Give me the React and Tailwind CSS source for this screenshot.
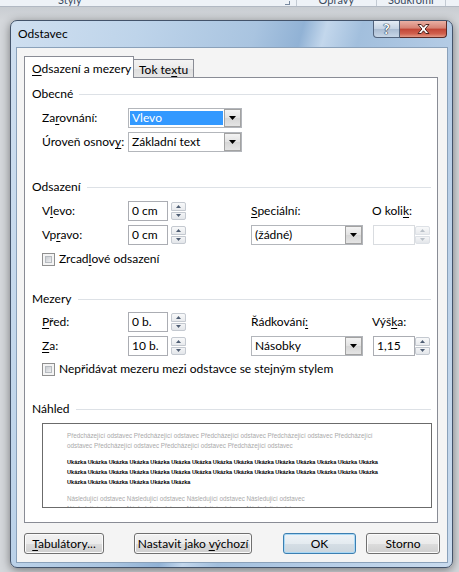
import React from "react";

function U({ children }) {
  return <span className="underline decoration-[1px] underline-offset-[2px]">{children}</span>;
}

function Heading({ label, className }) {
  return (
    <div className={`flex h-[14px] items-center pl-[7px] pr-[6px] ${className}`}>
      <span className="leading-none">{label}</span>
      <div className="ml-[6px] h-px flex-1 bg-[#dde1e6]" />
    </div>
  );
}

function DropBtn({ faded }) {
  return (
    <div className="flex h-full w-[17px] items-center justify-center border border-[#a2a2a2] bg-[linear-gradient(#f3f3f3,#e2e2e2_50%,#d6d6d6_51%,#e4e4e4)]">
      <svg width="7" height="4" viewBox="0 0 7 4">
        <path d="M0 0h7L3.5 4z" fill={faded ? "#888" : "#000"} />
      </svg>
    </div>
  );
}

function Combo({ value, selected, className }) {
  return (
    <div className={`flex h-[20px] border border-[#b3b6bb] bg-white ${className}`}>
      <div className="flex flex-1 px-[1px] py-[2px]">
        <span
          className={`flex w-full items-center pl-[2px] leading-none ${
            selected ? "bg-[#3399ff] text-white" : "text-black"
          }`}
        >
          {value}
        </span>
      </div>
      <DropBtn />
    </div>
  );
}

function Spinner({ disabled }) {
  const fill = disabled ? "#b9c0c8" : "#4f5e74";
  return (
    <div className="flex h-[18px] w-[15px] flex-col gap-px">
      <div
        className={`flex flex-1 items-center justify-center rounded-t-[2px] border ${
          disabled ? "border-[#dde1e6]" : "border-[#c4c9d0]"
        } bg-[linear-gradient(#f8f9fa,#e8eaed)]`}
      >
        <svg width="5" height="3" viewBox="0 0 5 3">
          <path d="M0 3h5L2.5 0z" fill={fill} />
        </svg>
      </div>
      <div
        className={`flex flex-1 items-center justify-center rounded-b-[2px] border ${
          disabled ? "border-[#dde1e6]" : "border-[#c4c9d0]"
        } bg-[linear-gradient(#f3f4f6,#e3e6ea)]`}
      >
        <svg width="5" height="3" viewBox="0 0 5 3">
          <path d="M0 0h5L2.5 3z" fill={fill} />
        </svg>
      </div>
    </div>
  );
}

function SpinField({ value, disabled, tight }) {
  return (
    <div className="flex h-[20px] items-center">
      <div
        className={`flex h-full items-center border bg-white pl-[3px] leading-none ${
          disabled ? "border-[#d9dce0]" : "border-[#abadb3]"
        } ${tight ? "w-[42px]" : "w-[40px]"}`}
      >
        {value}
      </div>
      <div className={tight ? "ml-0" : "ml-[3px]"}>
        <Spinner disabled={disabled} />
      </div>
    </div>
  );
}

function Check({ label }) {
  return (
    <div className="flex h-[14px] items-center pl-[17px]">
      <div className="h-[13px] w-[13px] border border-[#8f8f8f] bg-[#f4f4f4] p-[2px]">
        <div className="h-full w-full border border-[#b7bbc0] bg-[linear-gradient(135deg,#c9ccd1,#eeeff1)]" />
      </div>
      <span className="ml-[4px] leading-none">{label}</span>
    </div>
  );
}

function Btn({ children, className, focused }) {
  return (
    <div
      className={`flex h-[21px] items-center justify-center rounded-[3px] border leading-none ${
        focused
          ? "border-[#3c7fb1] bg-[linear-gradient(#eef3f7,#e4ebf0_50%,#d5dee5_51%,#cbd6de)] shadow-[inset_0_0_0_1px_#a9d8f5]"
          : "border-[#707070] bg-[linear-gradient(#f2f2f2,#ebebeb_50%,#dddddd_51%,#cfcfcf)] shadow-[inset_0_0_0_1px_#fbfbfb]"
      } ${className}`}
    >
      {children}
    </div>
  );
}

const PREV = "Předcházející odstavec";
const NEXT = "Následující odstavec";

export default function App() {
  const ukazka = (n) => Array(n).fill("Ukázka").join(" ");
  return (
    <div className="h-[572px] w-[459px] overflow-hidden bg-[#d4d7db] font-['Lato',sans-serif] text-[12px] text-black">
      {/* ribbon sliver behind the dialog */}
      <div className="flex h-[7px] overflow-hidden border-b border-[#b2b9c3] bg-[#eef2f7] text-[11px] text-[#3b4a5e]">
        <span className="-mt-[8px] ml-[58px]">Styly</span>
        <div className="ml-[203px] mt-[1px] h-[4px] w-[5px] border-r border-b border-[#7a8aa0]" />
        <div className="ml-[6px] h-full w-px bg-[#c3cad3]" />
        <span className="-mt-[8px] ml-[22px]">Opravy</span>
        <div className="ml-[22px] h-full w-px bg-[#c3cad3]" />
        <span className="-mt-[8px] ml-[11px]">Soukromí</span>
        <div className="ml-[11px] h-full w-px bg-[#c3cad3]" />
      </div>
      <div className="h-[13px] bg-[linear-gradient(#c9cdd2,#d3d6da)]" />

      {/* dialog */}
      <div className="ml-[10px] w-[443px] rounded-[7px] border border-[#43536a] bg-[linear-gradient(105deg,#cfdff0_0%,#bed4ea_22%,#a9c4e0_42%,#91b2d5_50%,#c3d7ec_54%,#a2bfdd_60%,#b6cde6_78%,#c9dbee_100%)] shadow-[0_2px_10px_rgba(0,0,0,0.45)]">
        {/* title bar */}
        <div className="flex h-[27px] items-start">
          <span className="ml-[7px] mt-[7px] text-[12px] leading-none">Odstavec</span>
          <div className="flex-1" />
          <div className="mr-[5px] flex h-[17px]">
            <div className="flex w-[27px] items-center justify-center rounded-bl-[4px] border border-t-0 border-[#52637c] bg-[linear-gradient(#e4ecf5,#c5d3e3_48%,#a9bbd1_50%,#c7d6e7)]">
              <span className="text-[14px] font-bold leading-none text-white [text-shadow:0_0_1px_#1d2b40,0_0_1px_#1d2b40,0_0_1px_#1d2b40]">
                ?
              </span>
            </div>
            <div className="flex w-[47px] items-center justify-center rounded-br-[4px] border border-l-0 border-t-0 border-[#5b2a26] bg-[linear-gradient(#eab0a4,#d68273_45%,#c14535_50%,#d0604d_80%,#e39a87)]">
              <svg width="15" height="12" viewBox="0 0 15 12">
                <path
                  d="M2 1.5h3.2l2.3 2.7 2.3-2.7H13l-3.9 4.5 3.9 4.5H9.8L7.5 7.8 5.2 10.5H2l3.9-4.5z"
                  fill="#fff"
                  stroke="#3a1410"
                  strokeWidth="0.9"
                  strokeLinejoin="round"
                />
              </svg>
            </div>
          </div>
        </div>

        {/* client area */}
        <div className="mx-[6px] mb-[5px] ml-[6px] h-[514px] w-[430px] bg-[#f4f4f4] px-[7px] pt-[8px] shadow-[0_0_0_1px_#8aa1ba]">
          {/* tabs */}
          <div className="flex h-[21px] items-end">
            <div className="relative z-10 -mb-px flex h-[22px] w-[110px] items-center border border-b-0 border-[#898c95] bg-white pl-[7px] pt-[3px] leading-none">
              <U>O</U>dsazení a mezery
            </div>
            <div className="flex h-[18px] w-[60px] items-center border border-l-0 border-b-0 border-[#898c95] bg-[linear-gradient(#f3f3f3,#ebebeb_50%,#dedede_51%,#e6e6e6)] pl-[5px] pt-[2px] leading-none">
              Tok te<U>x</U>tu
            </div>
          </div>

          {/* panel */}
          <div className="h-[446px] w-[414px] border border-[#898c95] bg-white">
            <Heading label="Obecné" className="mt-[9px]" />
            <div className="mt-[7px] flex h-[20px] items-center pl-[17px]">
              <span className="w-[86px] leading-none">
                Za<U>r</U>ovnání:
              </span>
              <Combo value="Vlevo" selected className="w-[114px]" />
            </div>
            <div className="mt-[4px] flex h-[20px] items-center pl-[17px]">
              <span className="w-[86px] leading-none">
                Úroveň osnov<U>y</U>:
              </span>
              <Combo value="Základní text" className="w-[114px]" />
            </div>

            <Heading label="Odsazení" className="mt-[28px]" />
            <div className="mt-[7px] flex h-[20px] items-center pl-[17px]">
              <span className="w-[86px] leading-none">
                V<U>l</U>evo:
              </span>
              <div className="w-[123px]">
                <SpinField value="0 cm" />
              </div>
              <span className="w-[121px] leading-none">
                <U>S</U>peciální:
              </span>
              <span className="leading-none">
                O koli<U>k</U>:
              </span>
            </div>
            <div className="mt-[4px] flex h-[20px] items-center pl-[17px]">
              <span className="w-[86px] leading-none">
                Vp<U>r</U>avo:
              </span>
              <div className="w-[123px]">
                <SpinField value="0 cm" />
              </div>
              <div className="w-[122px]">
                <Combo value="(žádné)" className="w-[112px]" />
              </div>
              <SpinField value="" disabled tight />
            </div>
            <div className="mt-[7px]">
              <Check
                label={
                  <>
                    Zrcad<U>l</U>ové odsazení
                  </>
                }
              />
            </div>

            <Heading label="Mezery" className="mt-[26px]" />
            <div className="mt-[6px] flex h-[20px] items-center pl-[17px]">
              <span className="w-[86px] leading-none">
                <U>P</U>řed:
              </span>
              <div className="w-[123px]">
                <SpinField value="0 b." />
              </div>
              <span className="w-[121px] leading-none">
                Řádkování<U>:</U>
              </span>
              <span className="leading-none">
                Výš<U>k</U>a:
              </span>
            </div>
            <div className="mt-[4px] flex h-[20px] items-center pl-[17px]">
              <span className="w-[86px] leading-none">
                <U>Z</U>a:
              </span>
              <div className="w-[123px]">
                <SpinField value="10 b." />
              </div>
              <div className="w-[122px]">
                <Combo value="Násobky" className="w-[112px]" />
              </div>
              <SpinField value="1,15" tight />
            </div>
            <div className="mt-[6px]">
              <Check label="Nepřidávat mezeru mezi odstavce se stejným stylem" />
            </div>

            <Heading label="Náhled" className="mt-[26px]" />
            <div className="ml-[17px] mt-[7px] h-[85px] w-[390px] overflow-hidden border border-[#6b6b6b] bg-white pl-[24px] pt-[7px] font-['Liberation_Sans',sans-serif]">
              <div className="whitespace-nowrap text-[6.3px] leading-[10px] text-[#a9a9a9]">
                <div>{`${PREV} ${PREV} ${PREV} ${PREV} Předcházející`}</div>
                <div>{`odstavec ${PREV} ${PREV} ${PREV}`}</div>
              </div>
              <div className="mt-[6px] whitespace-nowrap text-[5.6px] font-bold leading-[10px] text-black">
                <div>{ukazka(15)}</div>
                <div>{ukazka(15)}</div>
                <div>{ukazka(6)}</div>
              </div>
              <div className="mt-[7px] whitespace-nowrap text-[6.3px] leading-[10px] text-[#a9a9a9]">
                <div>{`${NEXT} ${NEXT} ${NEXT} ${NEXT}`}</div>
                <div>{`${NEXT} ${NEXT} ${NEXT} ${NEXT}`}</div>
              </div>
            </div>
          </div>

          {/* buttons */}
          <div className="mt-[10px] flex">
            <Btn className="w-[80px]">
              <span>
                <U>T</U>abulátory...
              </span>
            </Btn>
            <Btn className="ml-[30px] w-[118px]">
              <span>
                Nastavit jako <U>v</U>ýchozí
              </span>
            </Btn>
            <Btn focused className="ml-[31px] w-[73px]">
              OK
            </Btn>
            <Btn className="ml-[10px] w-[74px]">Storno</Btn>
          </div>
        </div>
      </div>
    </div>
  );
}
